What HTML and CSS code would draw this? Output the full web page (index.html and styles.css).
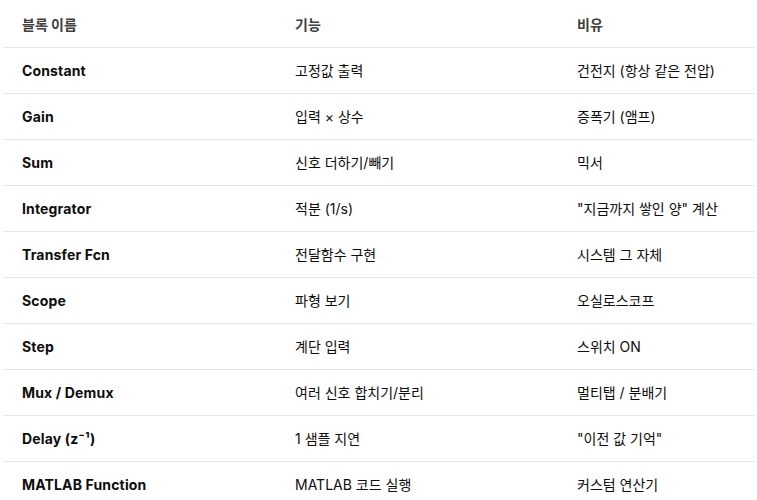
FILE: index.html
```html
<!DOCTYPE html>
<html lang="ko">
<head>
<meta charset="utf-8">
<link rel="stylesheet" href="styles.css">
</head>
<body>
<table class="tbl">
  <colgroup>
    <col class="c1"><col class="c2"><col class="c3">
  </colgroup>
  <thead>
    <tr><th>블록 이름</th><th>기능</th><th>비유</th></tr>
  </thead>
  <tbody>
    <tr><td class="name">Constant</td><td>고정값 출력</td><td>건전지 (항상 같은 전압)</td></tr>
    <tr><td class="name">Gain</td><td>입력 × 상수</td><td>증폭기 (앰프)</td></tr>
    <tr><td class="name">Sum</td><td>신호 더하기/빼기</td><td>믹서</td></tr>
    <tr><td class="name">Integrator</td><td>적분 (1/s)</td><td>"지금까지 쌓인 양" 계산</td></tr>
    <tr><td class="name">Transfer Fcn</td><td>전달함수 구현</td><td>시스템 그 자체</td></tr>
    <tr><td class="name">Scope</td><td>파형 보기</td><td>오실로스코프</td></tr>
    <tr><td class="name">Step</td><td>계단 입력</td><td>스위치 ON</td></tr>
    <tr><td class="name">Mux / Demux</td><td>여러 신호 합치기/분리</td><td>멀티탭 / 분배기</td></tr>
    <tr><td class="name">Delay (z⁻¹)</td><td>1 샘플 지연</td><td>"이전 값 기억"</td></tr>
    <tr><td class="name">MATLAB Function</td><td>MATLAB 코드 실행</td><td>커스텀 연산기</td></tr>
  </tbody>
</table>
</body>
</html>
```
FILE: styles.css
```css
html, body {
  margin: 0;
  padding: 0;
  background: #ffffff;
}
body {
  font-family: Inter, "Noto Sans CJK KR", sans-serif;
  font-size: 14px;
  color: #0d0d0d;
}
.tbl {
  margin: 1px 0 0 3px;
  border-collapse: collapse;
  table-layout: fixed;
  width: 752px;
}
.c1 { width: 273px; }
.c2 { width: 282px; }
.c3 { width: 197px; }
.tbl th, .tbl td {
  text-align: left;
  padding: 12px 0 12px 19px;
  line-height: 21px;
  border-bottom: 1px solid #e6e6e6;
  white-space: nowrap;
}
.tbl th {
  padding-top: 13px;
  font-weight: 700;
  color: #404040;
}
.tbl td.name {
  font-weight: 700;
  letter-spacing: 0.15px;
}
```
